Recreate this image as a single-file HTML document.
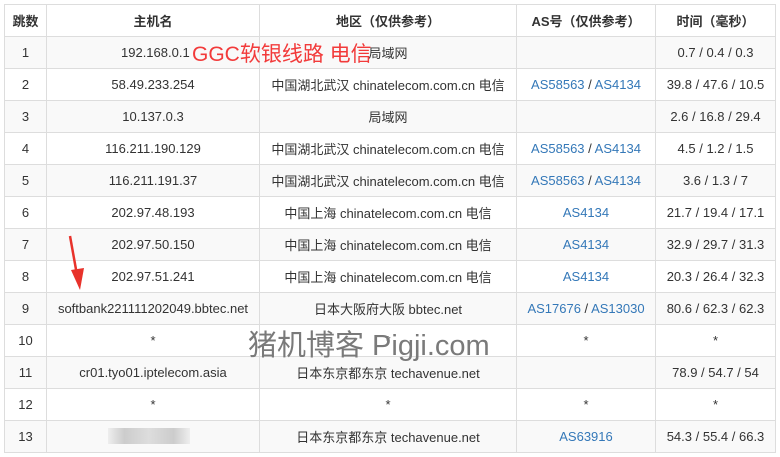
<!DOCTYPE html>
<html><head><meta charset="utf-8"><style>
body{margin:0;background:#fff;width:780px;height:457px;overflow:hidden;position:relative;font-family:"Liberation Sans","Noto Sans CJK SC",sans-serif;font-size:13px;color:#333}
table{position:absolute;left:4px;top:4px;border-collapse:collapse;width:772px}
td,th{border:1px solid #ddd;text-align:center;height:31px;padding:0;white-space:nowrap}
th{height:31px;font-weight:bold;background:#fff}
tr:nth-child(even) td{background:#f9f9f9}
a{color:#3478b8;text-decoration:none}
.wm{position:absolute;left:248px;top:322px;font-size:29px;color:#7a7a7a;font-family:"Liberation Sans","Noto Sans CJK SC",sans-serif}
.red{position:absolute;left:192px;top:38px;font-size:21px;color:#f23a3a}
.blur{position:absolute;left:108px;top:428px;width:82px;height:16px;background:linear-gradient(90deg,#eee,#ccc 20%,#ddd 50%,#ccc 80%,#eee)}
</style></head><body>
<table>
<tr><th style="width:41px">跳数</th><th style="width:212px">主机名</th><th style="width:256px">地区（仅供参考）</th><th style="width:138px">AS号（仅供参考）</th><th>时间（毫秒）</th></tr>
<tr><td>1</td><td style="text-align:left;padding-left:74px">192.168.0.1</td><td>局域网</td><td></td><td>0.7 / 0.4 / 0.3</td></tr>
<tr><td>2</td><td>58.49.233.254</td><td>中国湖北武汉 chinatelecom.com.cn 电信</td><td><a>AS58563</a> / <a>AS4134</a></td><td>39.8 / 47.6 / 10.5</td></tr>
<tr><td>3</td><td>10.137.0.3</td><td>局域网</td><td></td><td>2.6 / 16.8 / 29.4</td></tr>
<tr><td>4</td><td>116.211.190.129</td><td>中国湖北武汉 chinatelecom.com.cn 电信</td><td><a>AS58563</a> / <a>AS4134</a></td><td>4.5 / 1.2 / 1.5</td></tr>
<tr><td>5</td><td>116.211.191.37</td><td>中国湖北武汉 chinatelecom.com.cn 电信</td><td><a>AS58563</a> / <a>AS4134</a></td><td>3.6 / 1.3 / 7</td></tr>
<tr><td>6</td><td>202.97.48.193</td><td>中国上海 chinatelecom.com.cn 电信</td><td><a>AS4134</a></td><td>21.7 / 19.4 / 17.1</td></tr>
<tr><td>7</td><td>202.97.50.150</td><td>中国上海 chinatelecom.com.cn 电信</td><td><a>AS4134</a></td><td>32.9 / 29.7 / 31.3</td></tr>
<tr><td>8</td><td>202.97.51.241</td><td>中国上海 chinatelecom.com.cn 电信</td><td><a>AS4134</a></td><td>20.3 / 26.4 / 32.3</td></tr>
<tr><td>9</td><td>softbank221111202049.bbtec.net</td><td>日本大阪府大阪 bbtec.net</td><td><a>AS17676</a> / <a>AS13030</a></td><td>80.6 / 62.3 / 62.3</td></tr>
<tr><td>10</td><td>*</td><td>*</td><td>*</td><td>*</td></tr>
<tr><td>11</td><td>cr01.tyo01.iptelecom.asia</td><td>日本东京都东京 techavenue.net</td><td></td><td>78.9 / 54.7 / 54</td></tr>
<tr><td>12</td><td>*</td><td>*</td><td>*</td><td>*</td></tr>
<tr><td>13</td><td></td><td>日本东京都东京 techavenue.net</td><td><a>AS63916</a></td><td>54.3 / 55.4 / 66.3</td></tr>
</table>
<div class="red">GGC软银线路 电信</div>
<div class="wm">猪机博客 Pigji.com</div>
<div class="blur"></div>
<svg style="position:absolute;left:0;top:0" width="780" height="457"><line x1="70" y1="236" x2="77" y2="275" stroke="#e8322b" stroke-width="2.5"/><polygon points="71,270 84,268 80,290" fill="#e8322b"/></svg>
</body></html>
